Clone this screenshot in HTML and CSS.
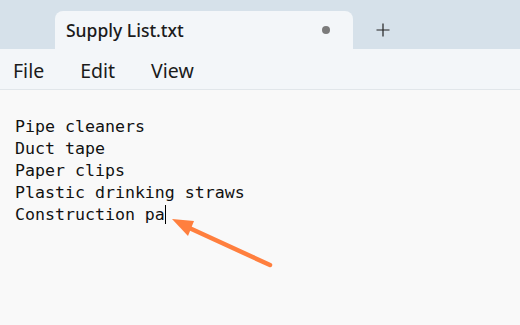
FILE: index.html
```html
<!DOCTYPE html>
<html lang="en">
<head>
  <meta charset="UTF-8">
  <title>Supply List.txt - Notepad</title>
  <link rel="stylesheet" href="styles.css">
</head>
<body>
  <div class="titlebar">
    <div class="tab">
      <span class="tab-title">Supply List.txt</span>
      <span class="unsaved-dot"></span>
    </div>
    <div class="new-tab">
      <svg width="14" height="14" viewBox="0 0 14 14"><path d="M7 0.5V13.5M0.5 7H13.5" stroke="#222" stroke-width="1.2" fill="none"/></svg>
    </div>
  </div>

  <div class="menubar">
    <span class="menu-item">File</span>
    <span class="menu-item">Edit</span>
    <span class="menu-item">View</span>
  </div>

  <div class="editor">
    <div class="line">Pipe cleaners</div>
    <div class="line">Duct tape</div>
    <div class="line">Paper clips</div>
    <div class="line">Plastic drinking straws</div>
    <div class="line">Construction pa<span class="caret"></span></div>

    <!-- annotation arrow pointing at the caret -->
    <svg class="arrow" width="520" height="325" viewBox="0 0 520 325">
      <line x1="270" y1="265" x2="185" y2="226" stroke="#ff7f3e" stroke-width="4.5" stroke-linecap="round"/>
      <polygon points="172,219 194,221 188,236" fill="#ff7f3e"/>
    </svg>
  </div>
</body>
</html>
```

FILE: styles.css
```css
html, body {
  margin: 0;
  height: 100%;
}
body {
  font-family: "Noto Sans", "Open Sans", sans-serif;
  background: #f9f9f9;
  color: #1b1b1b;
  overflow: hidden;
}
.titlebar {
  height: 49px;
  background: #d6e1ea;
  display: flex;
  align-items: flex-end;
  padding-left: 55px;
}
.tab {
  width: 298px;
  height: 38px;
  box-sizing: border-box;
  background: #f3f6f9;
  border-radius: 8px 8px 0 0;
  display: flex;
  align-items: center;
  padding: 0 23px 0 11px;
}
.tab-title {
  font-size: 17.5px;
  font-weight: 500;
}
.unsaved-dot {
  margin-left: auto;
  width: 8px;
  height: 8px;
  border-radius: 50%;
  background: #7b7b7b;
}
.new-tab {
  width: 60px;
  height: 38px;
  display: flex;
  align-items: center;
  justify-content: center;
}
.menubar {
  height: 41px;
  background: #f3f6f9;
  border-bottom: 1px solid #e1e6ea;
  display: flex;
  align-items: center;
  gap: 36px;
  padding: 3px 0 0 13px;
  box-sizing: border-box;
}
.menu-item {
  font-size: 19.5px;
  color: #1b1b1b;
}
.editor {
  padding: 26px 15px 0;
  font-family: "DejaVu Sans Mono", "Liberation Mono", monospace;
  font-size: 16.6px;
  line-height: 22px;
  color: #111;
}
.caret {
  display: inline-block;
  width: 1px;
  height: 19px;
  background: #000;
  vertical-align: -4px;
}
.arrow {
  position: absolute;
  left: 0;
  top: 0;
  pointer-events: none;
}
```
